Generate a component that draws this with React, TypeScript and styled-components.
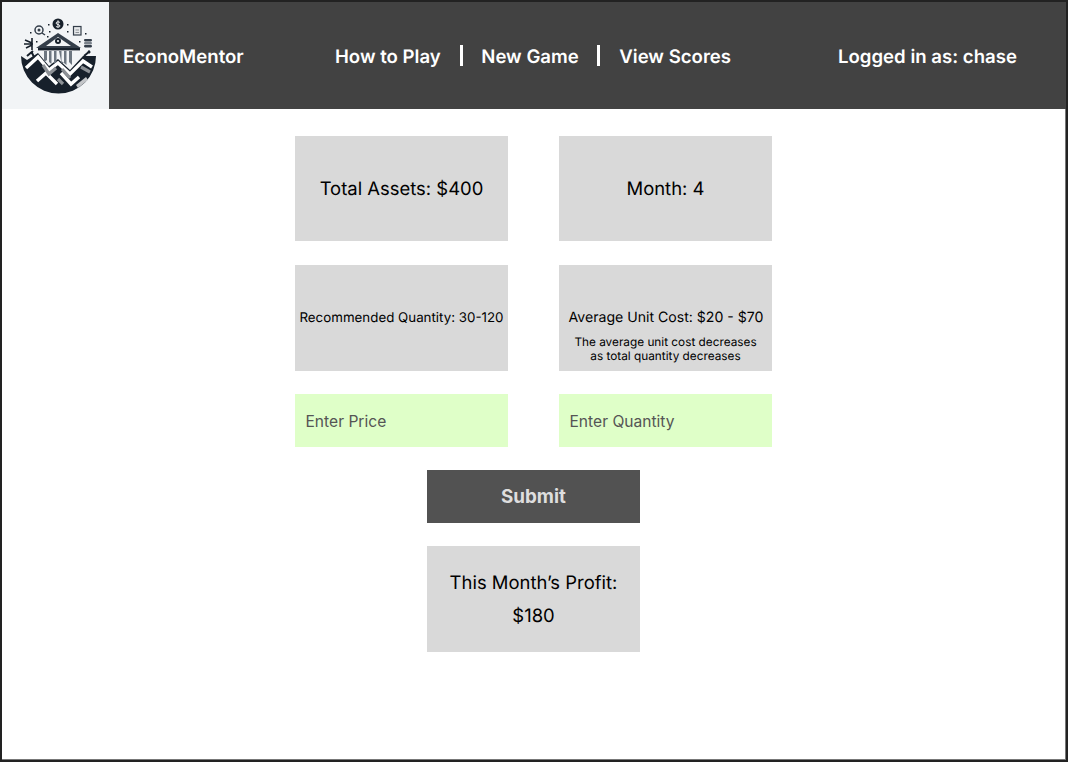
import styled, { createGlobalStyle } from 'styled-components';

const GlobalStyle = createGlobalStyle`
  html, body {
    margin: 0;
    padding: 0;
    background: #fff;
  }
  * {
    box-sizing: border-box;
  }
`;

function Logo() {
  return (
    <svg width="80" height="80" viewBox="18 16 80 80" fill="none">
      {/* bowl with the mountain ridge on top */}
      <path d="M21 56 L27 60 L38 53 L49 66 L58 59 L70 70 L83 56 L96 56 A37.500 37.500 0 0 1 21 56 Z" fill="#17202b" />
      {/* white chevrons */}
      <g stroke="#fff" strokeWidth="3.400" strokeLinejoin="miter">
        <path d="M26 68 L38 57 L49 70 L58 63 L70 74 L83 61 L92 67" />
        <path d="M37 81 L46 73 L57 84" />
        <path d="M61 73 L71 84 L79 77" />
      </g>
      <g stroke="#8d9196" strokeWidth="3.200">
        <path d="M43 65 L49 74 L56 68" />
        <path d="M62 69 L70 78" />
        <path d="M81 67 L90 72" />
        <path d="M58 79 L63 84" />
      </g>
      <path d="M76 85 L86 77 L88 80 L78 88 Z" fill="#c4c6c9" />
      {/* bank */}
      <path d="M58 33 L81 48 L36 48 Z" fill="#343e4a" />
      <path d="M58 37 L71 46 L46 46 Z" fill="#f2f4f6" />
      <circle cx="58" cy="41" r="3" fill="#17202b" />
      <circle cx="58" cy="41" r="1.100" fill="#f2f4f6" />
      <rect x="38" y="48" width="42" height="2.400" fill="#17202b" />
      <path d="M44 51h3v9l-3 2zM49 51h2.500v13l-2.500-2zM54 51h2.500v11l-2.500 2zM59 51h2.500v10l2.500 2h-2.500zM64 51h2.500v14l-2.500-2zM69 51h3v14l-3-3z" fill="#6d7680" />
      {/* coin */}
      <circle cx="58" cy="24" r="5.500" fill="#17202b" />
      <path d="M60 22.600c-.6-1-3.900-1.200-3.900.5 0 1.900 3.900 1 3.900 2.900 0 1.500-3.300 1.400-4.100.3M58 20.300v7.400" stroke="#fff" strokeWidth="0.900" />
      {/* target */}
      <circle cx="39" cy="30" r="4" stroke="#343e4a" strokeWidth="1.500" />
      <circle cx="39" cy="30" r="1.500" fill="#343e4a" />
      <path d="M42 33l3 2" stroke="#343e4a" strokeWidth="1.500" />
      {/* note */}
      <rect x="73.500" y="26.500" width="7.500" height="8.500" stroke="#343e4a" strokeWidth="1.200" fill="#e6e8ea" />
      <path d="M75.500 30h3.500M75.500 32.500h3.500" stroke="#8d9196" />
      {/* dots */}
      <path d="M48 24h1.500v1.500H48zM67 24h1.500v1.500H67zM30 32h1.500v1.500H30zM85 33h1.500v1.500H85zM49 31h1.500v1.500H49zM67 31h1.500v1.500H67zM47 36h1.500v1.500H47zM79 41h1.500v1.500H79zM36 41h1.500v1.500H36z" fill="#17202b" />
      {/* stacked coins */}
      <rect x="84" y="39" width="8" height="2.400" rx="1.100" fill="#343e4a" />
      <rect x="84" y="42" width="8" height="2.400" rx="1.100" fill="#7a828b" />
      <rect x="84" y="45" width="8" height="2.400" rx="1.100" fill="#343e4a" />
      {/* sprigs */}
      <path d="M25 40l7 3M24 44l9 0M26 48l6-3M32 38v12" stroke="#17202b" strokeWidth="1.600" />
      <path d="M27 56l6-5M32 53l2 4M84 56l6-5M88 51l2 2" stroke="#17202b" strokeWidth="2" />
    </svg>
  );
}

export default function App() {
  return (
    <>
      <GlobalStyle />
      <Frame>
        <Header>
          <LogoBox>
            <Logo />
          </LogoBox>
          <Brand>EconoMentor</Brand>
          <Nav>
            <NavLink>How to Play</NavLink>
            <Divider />
            <NavLink>New Game</NavLink>
            <Divider />
            <NavLink>View Scores</NavLink>
          </Nav>
          <User>Logged in as: chase</User>
        </Header>
        <Main>
          <Grid>
            <StatBox>Total Assets: $400</StatBox>
            <StatBox>Month: 4</StatBox>
            <InfoBox>
              <RecommendedText>Recommended Quantity: 30-120</RecommendedText>
            </InfoBox>
            <InfoBox>
              <CostText>Average Unit Cost: $20 - $70</CostText>
              <CostNote>
                The average unit cost decreases
                <br />
                as total quantity decreases
              </CostNote>
            </InfoBox>
            <Field placeholder="Enter Price" />
            <Field placeholder="Enter Quantity" />
          </Grid>
          <SubmitButton type="button">Submit</SubmitButton>
          <ProfitBox>
            This Month’s Profit:
            <br />
            $180
          </ProfitBox>
        </Main>
      </Frame>
    </>
  );
}

const Frame = styled.div`
  width: 1068px;
  height: 762px;
  border: 2px solid #222;
  box-shadow: inset -1px -1px 0 #777;
  background: #fff;
  font-family: Inter, "Liberation Sans", sans-serif;
  font-optical-sizing: none;
  text-rendering: geometricPrecision;
  color: #000;
  overflow: hidden;
`;

const Header = styled.header`
  height: 107px;
  display: flex;
  align-items: center;
  background: #424242;
  color: #fff;
  font-size: 18.600px;
  font-weight: 600;
`;

const LogoBox = styled.div`
  width: 107px;
  height: 107px;
  flex-shrink: 0;
  display: flex;
  align-items: center;
  justify-content: center;
  padding: 1px 0 0 5px;
  background: #f2f4f6;
`;

const Brand = styled.div`
  width: 212px;
  padding: 3px 0 0 14px;
  flex-shrink: 0;
`;

const Nav = styled.nav`
  width: 517px;
  padding: 3px 0 0 14px;
  display: flex;
  align-items: center;
  gap: 18.750px;
  flex-shrink: 0;
`;

const NavLink = styled.span`
  white-space: nowrap;
`;

const Divider = styled.span`
  width: 3px;
  height: 21px;
  margin-top: -4px;
  background: #fff;
`;

const User = styled.div`
  padding-top: 3px;
  white-space: nowrap;
`;

const Main = styled.main`
  display: flex;
  flex-direction: column;
  align-items: center;
  padding-top: 27px;
  margin-left: -1px;
`;

const Grid = styled.div`
  display: grid;
  grid-template-columns: 213px 213px;
  grid-template-rows: 105px 106px 53px;
  column-gap: 51px;
  row-gap: 23.500px;
`;

const StatBox = styled.div`
  display: flex;
  align-items: center;
  justify-content: center;
  padding-top: 1px;
  background: #d9d9d9;
  font-size: 18.450px;
`;

const InfoBox = styled.div`
  display: flex;
  flex-direction: column;
  align-items: center;
  padding-top: 45px;
  background: #d9d9d9;
`;

const RecommendedText = styled.div`
  font-size: 13.330px;
  line-height: 16px;
  white-space: nowrap;
`;

const CostText = styled.div`
  padding-left: 1px;
  font-size: 14.100px;
  line-height: 16px;
  white-space: nowrap;
`;

const CostNote = styled.div`
  margin-top: 9px;
  font-size: 11.800px;
  line-height: 14px;
  text-align: center;
`;

const Field = styled.input`
  width: 100%;
  height: 100%;
  padding: 1px 10.500px 0;
  border: none;
  outline: none;
  background: #dfffc8;
  font-family: inherit;
  font-size: 15.600px;
  &::placeholder {
    color: #555;
    opacity: 1;
  }
`;

const SubmitButton = styled.button`
  width: 213px;
  height: 53px;
  margin-top: 23px;
  border: none;
  background: #525252;
  color: #dedede;
  font-family: inherit;
  font-size: 18.800px;
  font-weight: 700;
`;

const ProfitBox = styled.div`
  width: 213px;
  height: 106px;
  margin-top: 23px;
  padding-top: 1px;
  display: flex;
  align-items: center;
  justify-content: center;
  text-align: center;
  background: #d9d9d9;
  font-size: 18.450px;
  line-height: 33px;
`;
